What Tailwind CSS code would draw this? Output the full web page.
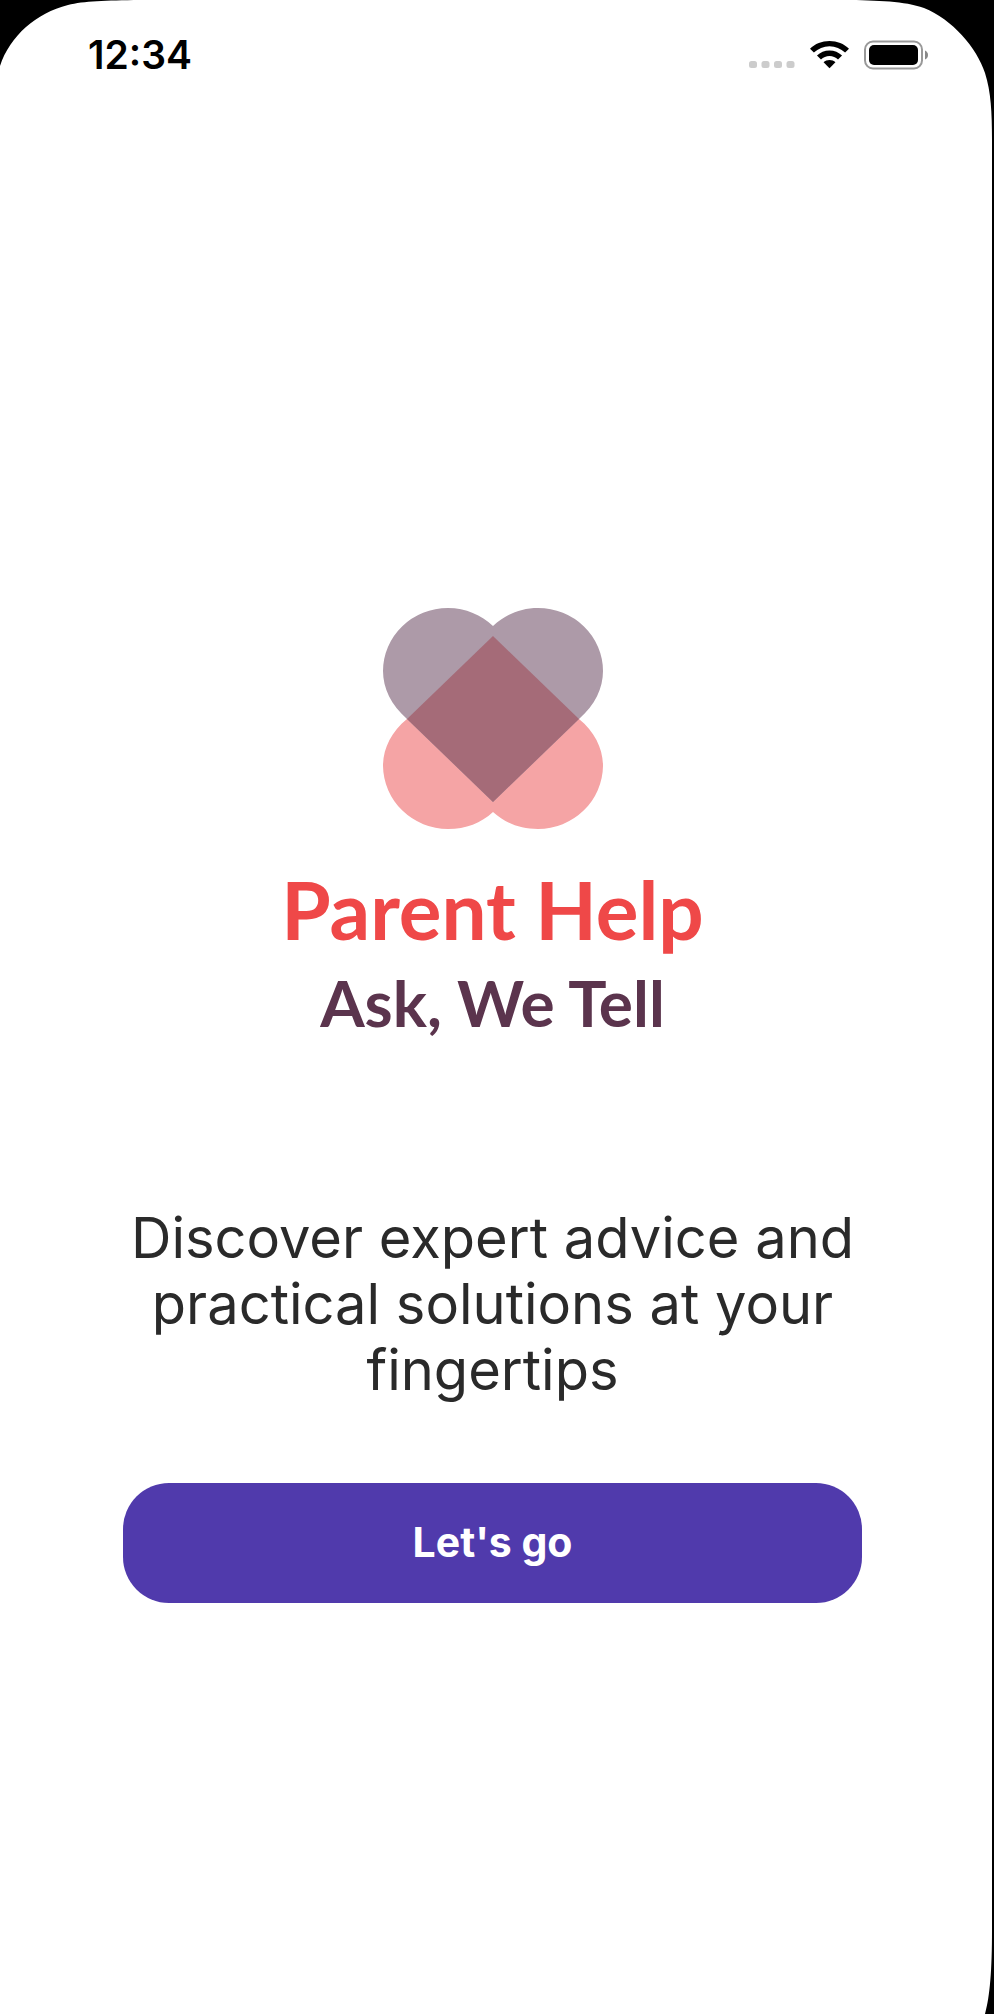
<!DOCTYPE html>
<html lang="en">
<head>
<meta charset="utf-8">
<meta name="viewport" content="width=device-width, initial-scale=1">
<title>Parent Help</title>
<script src="https://cdn.jsdelivr.net/npm/@tailwindcss/browser@4"></script>
</head>
<body class="bg-black font-['Inter',sans-serif]">
<div class="relative mr-0.5 flex min-h-screen flex-col overflow-hidden bg-white">
  <!-- screen corners -->
  <svg class="absolute left-0 top-0 h-[66px] w-[140px]" viewBox="0 0 140 66" aria-hidden="true"><path d="M0 0H140C105 .5 84 1 68 5C36 13 10 36 0 66Z"/></svg>
  <svg class="absolute right-0 top-0 h-[140px] w-[148px]" viewBox="0 0 148 140" aria-hidden="true"><path d="M0 0H148V140C148 112 147 92 141 73C133 48 108 19 80 8C60 1 35 .5 0 0Z"/></svg>
  <svg class="absolute bottom-0 right-0 h-[84px] w-[8px]" viewBox="0 0 8 84" aria-hidden="true"><path d="M8 0V84H1C6 66 8 40 8 0Z"/></svg>

  <header class="flex items-center justify-between pl-[88px] pr-16 pt-8">
    <time class="text-[39px] leading-[46px] font-semibold text-black">12:34</time>
    <div class="flex items-center gap-[15px]">
      <svg class="mt-[20px] h-2 w-[46px]" viewBox="0 0 46 8" fill="#ccc" aria-label="No signal" role="img"><rect width="8" height="7" rx="2.5"/><rect x="12.5" width="8" height="7" rx="2.5"/><rect x="25" width="8" height="7" rx="2.5"/><rect x="37.5" width="8" height="7" rx="2.5"/></svg>
      <svg class="h-7 w-[39px]" viewBox="0 0 38 28" preserveAspectRatio="none" aria-label="Wi-Fi" role="img"><path d="M19 0C11.500 0 5 2.800 0 7.700L3.800 11.600C8 7.500 13.200 5.200 19 5.200S30 7.500 34.200 11.600L38 7.700C33 2.800 26.500 0 19 0Z"/><path d="M19 9.500C14.200 9.500 10 11.400 6.800 14.600L10.700 18.500C13 16.300 15.800 15 19 15S25 16.300 27.300 18.500L31.200 14.600C28 11.400 23.800 9.500 19 9.500Z"/><path d="M19 19C16.700 19 14.800 19.800 13.200 21.300L19 27.200L24.800 21.300C23.200 19.800 21.300 19 19 19Z"/></svg>
      <svg class="h-[30px] w-16" viewBox="0 0 64 30" aria-label="Battery full" role="img"><rect x="1" y="1.500" width="57" height="27" rx="8" fill="none" stroke="#999" stroke-width="2"/><rect x="5" y="5" width="49" height="20" rx="5"/><path d="M61 10.500Q64 12 64 15T61 19.500Z" fill="#888"/></svg>
    </div>
  </header>

  <main class="flex flex-col items-center pl-[123px] pr-[130px] pt-[530px]">
    <svg class="h-[222px] w-[220px]" viewBox="0 0 220 222" aria-hidden="true">
      <path fill="#f5a4a5" d="M24 111C8 124 0 141 0 158A65 64 0 0 0 65 221C83 221 98 215 110 204C122 215 137 221 155 221A65 64 0 0 0 220 158C220 141 212 124 196 111L110 28Z"/>
      <path fill="#ad9aa8" d="M24 111C8 97 0 80 0 63A65 63 0 0 1 65 0C83 0 98 7 110 18C122 7 137 0 155 0A65 63 0 0 1 220 63C220 80 212 97 196 111L110 194Z"/>
      <path fill="#a56b78" d="M110 28L196 111L110 194L24 111Z"/>
    </svg>
    <h1 class="mt-[31px] font-[Lato,sans-serif] text-[80px] leading-[96px] font-bold text-[#ef4848]">Parent Help</h1>
    <p class="mt-1 font-[Lato,sans-serif] text-[64px] leading-[84px] font-bold text-[#5b344d]">Ask, We Tell</p>
    <p class="mt-[160px] text-center text-[56px] leading-[66px] text-[#2a2a2a]">Discover expert advice and practical solutions at your fingertips</p>
    <button type="button" class="mt-20 h-[120px] w-full rounded-[46px] bg-[#503aac] text-[41px] font-bold text-white">Let's go</button>
  </main>
</div>
</body>
</html>
